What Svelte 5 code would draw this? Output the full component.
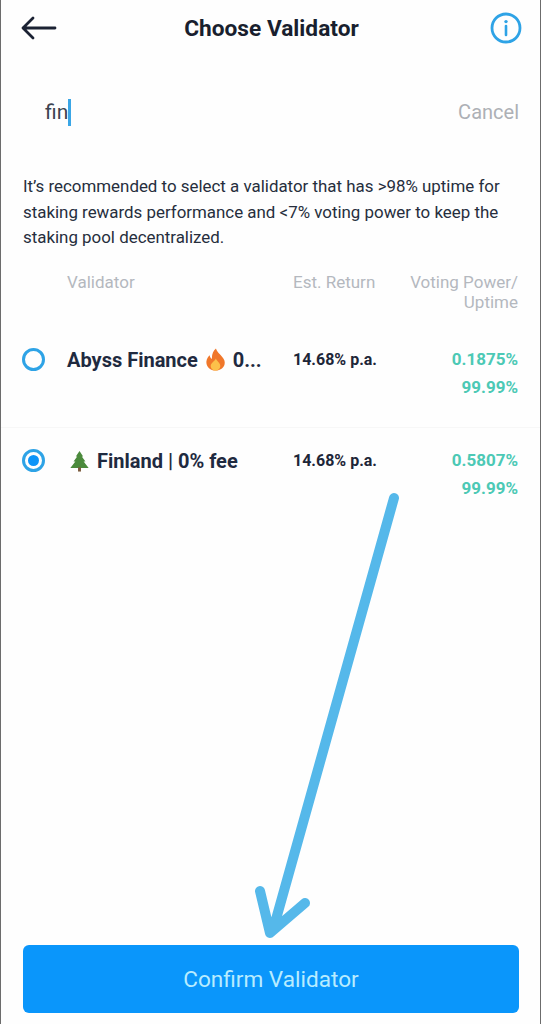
<script>
  let search = "fin";
  let selected = 1;

  const validators = [
    { name: "Abyss Finance", icon: "fire", suffix: "0...", ret: "14.68% p.a.", power: "0.1875%", uptime: "99.99%" },
    { name: "Finland | 0% fee", icon: "tree", suffix: "", ret: "14.68% p.a.", power: "0.5807%", uptime: "99.99%" }
  ];
</script>

<div class="page">
  <header class="top">
    <svg class="back" width="36" height="26" viewBox="0 0 36 26" fill="none" stroke="#1b2233" stroke-width="2.8" stroke-linecap="round" stroke-linejoin="round">
      <path d="M2 13H34M12 3L2 13L12 23" />
    </svg>
    <h1>Choose Validator</h1>
    <svg class="info" width="32" height="32" viewBox="0 0 32 32" fill="none">
      <circle cx="16" cy="16" r="14" stroke="#2ea3e6" stroke-width="2.8" />
      <circle cx="16" cy="9.6" r="1.7" fill="#2ea3e6" />
      <path d="M16 14V23" stroke="#2ea3e6" stroke-width="2.6" stroke-linecap="round" />
    </svg>
  </header>

  <div class="search">
    <div class="field">{search}<span class="caret"></span></div>
    <span class="cancel">Cancel</span>
  </div>

  <p class="note">It’s recommended to select a validator that has &gt;98% uptime for staking rewards performance and &lt;7% voting power to keep the staking pool decentralized.</p>

  <div class="cols">
    <span class="c-name">Validator</span>
    <span class="c-ret">Est. Return</span>
    <span class="c-power">Voting Power/<br />Uptime</span>
  </div>

  {#each validators as v, i}
    <div class="row" class:first={i === 0}>
      <span class="radio" class:on={selected === i}></span>
      <div class="name">
        {#if v.icon === "tree"}
          <svg class="emoji tree" width="21" height="22" viewBox="0 0 22 24">
            <path d="M11 1L15 7H13.5L17.5 12.5H15.5L21 19.5H1L6.5 12.5H4.5L8.5 7H7Z" fill="#4b8a3c" />
            <rect x="9.4" y="19" width="3.2" height="4.5" fill="#7a5a3c" />
          </svg>
          <span>{v.name}</span>
        {:else}
          <span>{v.name}</span>
          <svg class="emoji fire" width="21" height="23" viewBox="0 0 21 24">
            <path d="M11 0.5C12 5 18 8 19.8 13C21.5 19 16.5 23.5 10.5 23.5C5 23.5 0.5 19.5 1 14C1.3 11 3 8.5 4.5 7.5C4.6 9.5 5.5 10.8 6.8 11.3C6.5 7 8 3 11 0.5Z" fill="#f0772a" />
            <path d="M11 11C11.5 13.5 15.5 15.5 15.5 18.8C15.5 21.5 13.3 23.5 10.5 23.5C7.7 23.5 5.5 21.5 5.5 18.8C5.5 15.5 9.5 14 11 11Z" fill="#fcc04a" />
          </svg>
          <span>{v.suffix}</span>
        {/if}
      </div>
      <div class="ret">{v.ret}</div>
      <div class="stats">
        <span>{v.power}</span>
        <span>{v.uptime}</span>
      </div>
    </div>
  {/each}

  <div class="footer">
    <button class="confirm">Confirm Validator</button>
  </div>

  <svg class="arrow" width="541" height="1024" viewBox="0 0 541 1024" fill="none" stroke="#55b8ea" stroke-width="10" stroke-linecap="round" stroke-linejoin="round">
    <path d="M394 498L273 930M260 891L270 933L305 903" />
  </svg>
</div>

<style>
  :global(body) {
    margin: 0;
    background: #fff;
  }

  .page {
    position: relative;
    box-sizing: border-box;
    width: 541px;
    height: 1024px;
    display: flex;
    flex-direction: column;
    background: #fefefe;
    border-left: 1px solid #6c6c6c;
    border-right: 1px solid #6c6c6c;
    font-family: Roboto, "Liberation Sans", sans-serif;
    color: #1d2638;
    overflow: hidden;
  }

  .top {
    height: 56px;
    display: grid;
    grid-template-columns: 1fr auto 1fr;
    align-items: center;
    padding: 0 18px 0 20px;
  }

  .top h1 {
    margin: 0;
    font-size: 22.7px;
    font-weight: 700;
    color: #191f2e;
  }

  .info {
    justify-self: end;
  }

  .search {
    margin-top: 31px;
    height: 50px;
    display: flex;
    align-items: center;
    justify-content: space-between;
    padding: 0 21px 0 44px;
  }

  .field {
    display: flex;
    align-items: center;
    font-size: 21px;
    color: #3c4350;
  }

  .caret {
    width: 3px;
    height: 27px;
    background: #3aa6e6;
  }

  .cancel {
    font-size: 20px;
    color: #adb0b5;
  }

  .note {
    margin: 37px 21px 0 22px;
    font-size: 16.9px;
    line-height: 25.5px;
    color: #262e3d;
  }

  .cols {
    margin-top: 21px;
    display: flex;
    padding: 0 22px 0 66px;
    font-size: 17px;
    line-height: 20px;
    color: #b4b8be;
  }

  .c-name {
    width: 226px;
  }

  .c-power {
    flex: 1;
    text-align: right;
  }

  .row {
    height: 102px;
    display: flex;
    align-items: flex-start;
    padding: 0 22px 0 21px;
    border-bottom: 1px solid #f7f7f7;
    box-sizing: border-box;
  }

  .row.first {
    margin-top: 3px;
    height: 113px;
    padding-top: 30px;
  }

  .row:not(.first) {
    padding-top: 18px;
    border-bottom: 0;
  }

  .radio {
    box-sizing: border-box;
    width: 23px;
    height: 23px;
    margin-top: 3px;
    border: 3px solid #2ea3e6;
    border-radius: 50%;
    display: flex;
    align-items: center;
    justify-content: center;
  }

  .radio.on::after {
    content: "";
    width: 11px;
    height: 11px;
    border-radius: 50%;
    background: #0c94f8;
  }

  .name {
    width: 226px;
    margin-left: 22px;
    display: flex;
    align-items: center;
    gap: 7px;
    font-size: 20px;
    font-weight: 700;
    line-height: 30px;
    color: #1f2a40;
    white-space: nowrap;
  }

  .tree {
    margin-left: 2px;
  }

  .ret {
    font-size: 16px;
    font-weight: 700;
    line-height: 30px;
  }

  .stats {
    flex: 1;
    display: flex;
    flex-direction: column;
    align-items: flex-end;
    font-size: 17px;
    font-weight: 700;
    line-height: 28px;
    color: #4cc9b5;
  }

  .footer {
    margin-top: auto;
    padding: 0 21px 11px 22px;
  }

  .confirm {
    width: 100%;
    height: 68px;
    border: 0;
    border-radius: 6px;
    background: #0a96fb;
    color: #b8ecff;
    font-family: inherit;
    font-size: 22.6px;
  }

  .arrow {
    position: absolute;
    left: -1px;
    top: 0;
    pointer-events: none;
  }
</style>
